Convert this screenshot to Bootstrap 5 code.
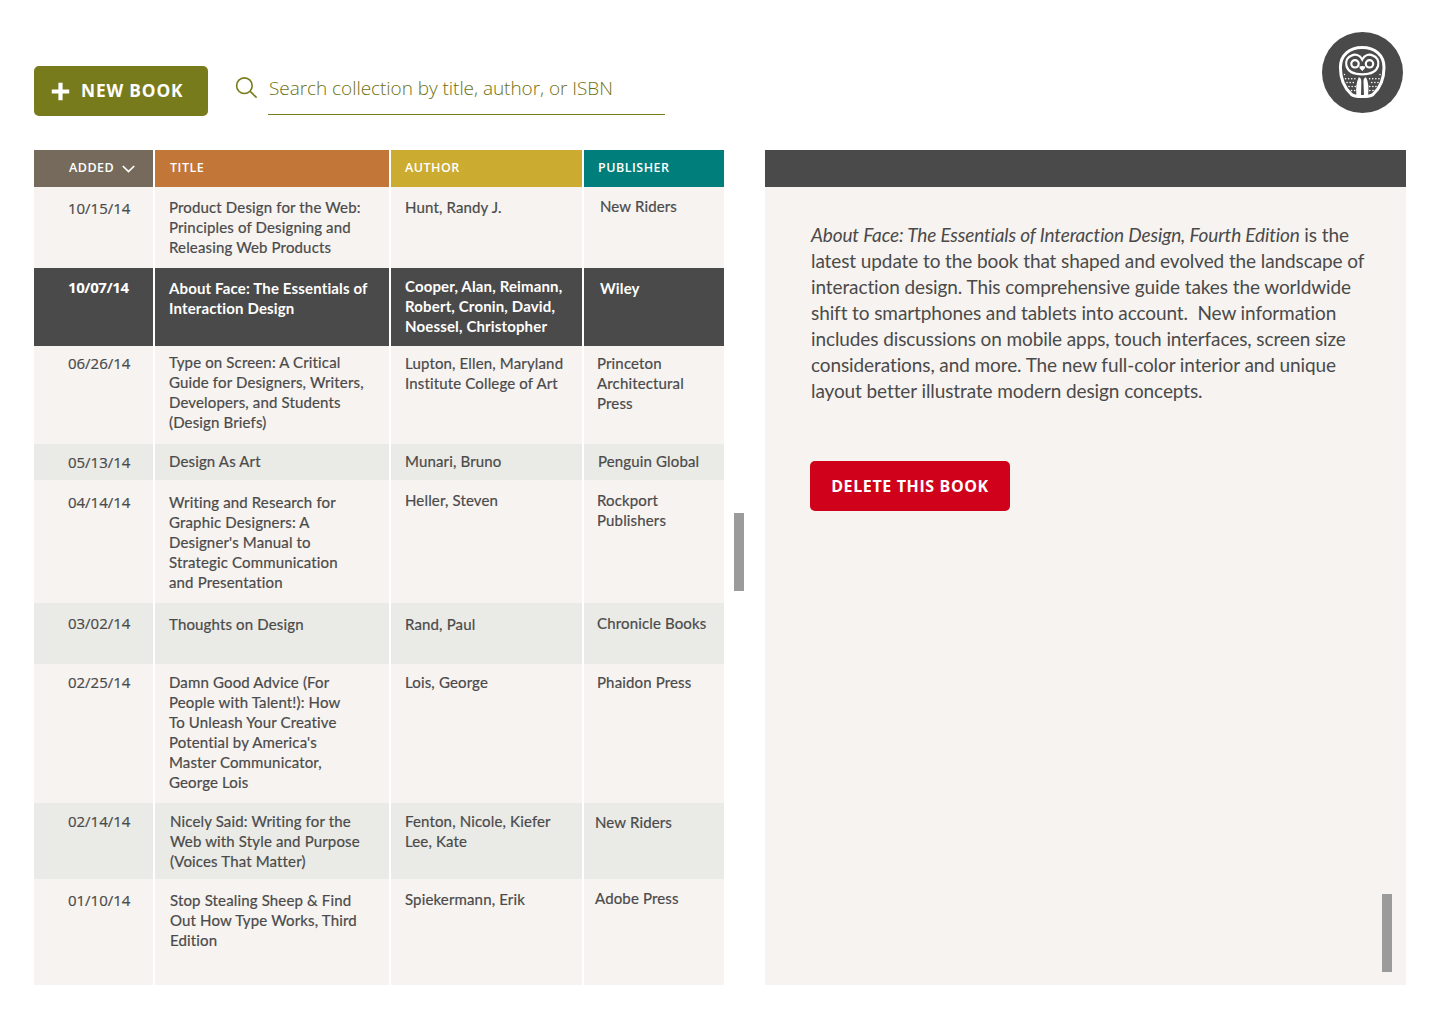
<!DOCTYPE html>
<html lang="en">
<head>
<meta charset="utf-8">
<meta name="viewport" content="width=device-width, initial-scale=1">
<title>Book collection</title>
<link href="https://cdn.jsdelivr.net/npm/bootstrap@5.3.0/dist/css/bootstrap.min.css" rel="stylesheet">
<style>
  body { font-family: Lato, "Open Sans", sans-serif; color: #4a4a4a; background: #fff; height: 1024px; overflow: hidden; }
  .page-top { height: 150px; padding: 32px 37px 0 34px; }
  .tools { padding-top: 34px; }
  .btn-cap, .btn-cap:hover { font-family: "Open Sans", sans-serif; font-weight: 700; color: #fff; border: 0; border-radius: 5px; height: 50px; padding: 0; white-space: nowrap; }
  .btn-new, .btn-new:hover { background: #777b1c; width: 174px; font-size: 17.3px; letter-spacing: .85px; padding-left: 17px; }
  .btn-new svg { margin-right: 11px; }
  .btn-delete, .btn-delete:hover { background: #d0021b; width: 200px; font-size: 16px; letter-spacing: .62px; }
  .search-box { margin-left: 27px; }
  .search-box svg { margin-top: 10px; }
  .search-line { width: 397px; height: 49px; margin-left: 10px; border: 0; border-bottom: 1px solid #777b1c; border-radius: 0; padding: 0 0 4px 1px; background: transparent; font-family: "Open Sans", sans-serif; font-weight: 300; font-size: 19px; letter-spacing: -.05px; color: #777b1c; }
  .search-line::placeholder { color: #6d7110; opacity: 1; }

  .panes { padding-left: 34px; height: 835px; }
  .books { width: 690px; }
  .book-row { display: grid; grid-template-columns: 119px 234px 191px 140px; column-gap: 2px; font-size: 15px; line-height: 20px; letter-spacing: .15px; }
  .book-row > div { background: #f7f3f0; padding: 10px 0 0 14px; white-space: nowrap; -webkit-text-stroke: .2px currentColor; }
  .book-row > div:first-child { padding-left: 34px; font-family: "Open Sans", sans-serif; letter-spacing: -.02px; }
  .book-row.alt > div { background: #eaeae6; }
  .book-row.picked > div { background: #4a4a4a; color: #fff; font-weight: 700; -webkit-text-stroke: 0; }
  .book-row.picked > div:first-child { letter-spacing: -.4px; }
  .book-row.heads { height: 37px; font-family: "Open Sans", sans-serif; font-weight: 600; font-size: 12.5px; letter-spacing: .5px; color: #fff; }
  .book-row.heads > div { padding-top: 8px; -webkit-text-stroke: 0; }
  .book-row.heads > div:first-child { padding-left: 35px; letter-spacing: .5px; }
  .heads .h-added { background: #766a5c; }
  .heads .h-title { background: #c27638; }
  .heads .h-author { background: #ccac30; }
  .heads .h-pub { background: #007e7b; }
  .h-36 { height: 36px; } .h-61 { height: 61px; } .h-76 { height: 76px; } .h-78 { height: 78px; } .h-81 { height: 81px; }
  .h-98 { height: 98px; } .h-106 { height: 106px; } .h-123 { height: 123px; } .h-139 { height: 139px; }
  .book-row > .y6 { padding-top: 6px; } .book-row > .y7 { padding-top: 7px; } .book-row > .y8 { padding-top: 8px; }
  .book-row > .y9 { padding-top: 9px; } .book-row > .y11 { padding-top: 11px; } .book-row > .y12 { padding-top: 12px; }
  .book-row > .x11 { padding-left: 11px; } .book-row > .x13 { padding-left: 13px; }
  .book-row > .x15 { padding-left: 15px; } .book-row > .x16 { padding-left: 16px; }

  .thumb { width: 10px; height: 78px; background: #9b9b9b; }
  .rail { width: 41px; padding: 363px 0 0 10px; }
  .detail { width: 641px; background: #f7f3f0; }
  .detail-bar { height: 37px; background: #4a4a4a; }
  .detail-body { height: 798px; padding: 35px 14px 13px 45px; }
  .blurb { font-size: 19px; line-height: 26px; letter-spacing: -.1px; white-space: nowrap; margin: 0 0 57px 1px; }
  .blurb em { letter-spacing: -.15px; }
</style>
</head>
<body>
<header class="page-top d-flex justify-content-between align-items-start">
  <div class="tools d-flex align-items-start">
    <button type="button" class="btn btn-cap btn-new d-flex align-items-center">
      <svg width="19" height="19" viewBox="0 0 19 19" aria-hidden="true"><path d="M9.5 .8v17.4M.8 9.5h17.4" stroke="#fff" stroke-width="4.2" fill="none"/></svg>
      <span>NEW BOOK</span>
    </button>
    <div class="search-box d-flex align-items-start">
      <svg width="23" height="23" viewBox="0 0 23 23" fill="none" stroke="#777b1c" stroke-width="1.6" aria-hidden="true"><circle cx="9.4" cy="9.7" r="7.8"/><path d="M14.9 15.2l6.7 6.4"/></svg>
      <input type="text" class="form-control search-line" placeholder="Search collection by title, author, or ISBN" aria-label="Search collection">
    </div>
  </div>
  <svg width="81" height="81" viewBox="0 0 81 81" aria-hidden="true">
    <circle cx="40.5" cy="40.5" r="40.5" fill="#4a4a4a"/>
    <g fill="none" stroke="#fff">
      <path stroke-width="3" d="M40.2 15.6C27.5 15.6 18.400 23 18.400 35.500C18.400 48 23.500 57 29.500 62.500C31.500 64.200 34.500 64.500 40.200 64.500C46 64.500 49 64.200 51 62.500C57 57 62 48 62 35.500C62 23 53 15.600 40.200 15.600Z"/>
      <path stroke-width="2.300" d="M40.200 27.500C37.500 22.500 33 22.200 30 23.300C25.500 24.800 23.300 29 24.500 34C26 39.800 32.500 42.300 40.200 42.300C48 42.300 54.500 39.800 56 34C57.200 29 55 24.800 50.500 23.300C47.500 22.200 43 22.500 40.200 27.500Z"/>
      <circle cx="33" cy="31.800" r="3.700" stroke-width="2.200"/>
      <circle cx="47.500" cy="31.800" r="3.700" stroke-width="2.200"/>
    </g>
    <path fill="#fff" d="M37.300 34.500q3-1 6 0q.3 1.500-3 4.500q-3.300-3-3-4.500zM34.500 63.500C33.500 56 34.500 50 36.800 45.200Q39.500 46 39.300 50L39 63.500ZM46 63.500C47 56 46.500 50 44 45.200Q41.200 46 41.500 50L42 63.500Z"/>
    <g fill="none" stroke="#fff" stroke-width="1.500" stroke-linecap="round" stroke-dasharray=".1 3">
      <path d="M22.500 42.500v3M23.500 46.700h9.500M25 50.500h8M27 54.500h7M29.500 58.500h4M58 42.500v3M57 46.700h-9.500M56 50.500h-8M54 54.500h-7M51 58.500h-4"/>
    </g>
  </svg>
</header>

<main class="panes d-flex">
  <section class="books">
    <div class="book-row heads">
      <div class="h-added">ADDED<svg class="ms-2" width="13" height="8" viewBox="0 0 13 8" aria-hidden="true"><path d="M.8 1l5.700 5.500L12.200 1" fill="none" stroke="#fff" stroke-width="1.700"/></svg></div>
      <div class="h-title x15">TITLE</div><div class="h-author">AUTHOR</div><div class="h-pub">PUBLISHER</div>
    </div>
    <div class="book-row h-81">
      <div class="y11">10/15/14</div><div>Product Design for the Web:<br>Principles of Designing and<br>Releasing Web Products</div><div>Hunt, Randy J.</div><div class="y9 x16">New Riders</div>
    </div>
    <div class="book-row picked h-78">
      <div class="y9">10/07/14</div><div>About Face: The Essentials of<br>Interaction Design</div><div class="y8">Cooper, Alan, Reimann,<br>Robert, Cronin, David,<br>Noessel, Christopher</div><div class="x16">Wiley</div>
    </div>
    <div class="book-row h-98">
      <div class="y7">06/26/14</div><div class="y6">Type on Screen: A Critical<br>Guide for Designers, Writers,<br>Developers, and Students<br>(Design Briefs)</div><div class="y7">Lupton, Ellen, Maryland<br>Institute College of Art</div><div class="y7 x13">Princeton<br>Architectural<br>Press</div>
    </div>
    <div class="book-row alt h-36">
      <div class="y8">05/13/14</div><div class="y7">Design As Art</div><div class="y7">Munari, Bruno</div><div class="y7">Penguin Global</div>
    </div>
    <div class="book-row h-123">
      <div class="y12">04/14/14</div><div class="y12">Writing and Research for<br>Graphic Designers: A<br>Designer's Manual to<br>Strategic Communication<br>and Presentation</div><div>Heller, Steven</div><div class="x13">Rockport<br>Publishers</div>
    </div>
    <div class="book-row alt h-61">
      <div>03/02/14</div><div class="y11">Thoughts on Design</div><div class="y11">Rand, Paul</div><div class="x13">Chronicle Books</div>
    </div>
    <div class="book-row h-139">
      <div class="y8">02/25/14</div><div class="y8">Damn Good Advice (For<br>People with Talent!): How<br>To Unleash Your Creative<br>Potential by America's<br>Master Communicator,<br>George Lois</div><div class="y8">Lois, George</div><div class="y8 x13">Phaidon Press</div>
    </div>
    <div class="book-row alt h-76">
      <div class="y8">02/14/14</div><div class="y8 x15">Nicely Said: Writing for the<br>Web with Style and Purpose<br>(Voices That Matter)</div><div class="y8">Fenton, Nicole, Kiefer<br>Lee, Kate</div><div class="y9 x11">New Riders</div>
    </div>
    <div class="book-row h-106">
      <div class="y11">01/10/14</div><div class="y11 x15">Stop Stealing Sheep &amp; Find<br>Out How Type Works, Third<br>Edition</div><div>Spiekermann, Erik</div><div class="y9 x11">Adobe Press</div>
    </div>
  </section>
  <div class="rail"><div class="thumb"></div></div>
  <section class="detail">
    <div class="detail-bar"></div>
    <div class="detail-body d-flex flex-column align-items-start">
      <p class="blurb"><em>About Face: The Essentials of Interaction Design, Fourth Edition</em> is the<br>latest update to the book that shaped and evolved the landscape of<br>interaction design. This comprehensive guide takes the worldwide<br>shift to smartphones and tablets into account.&nbsp; New information<br>includes discussions on mobile apps, touch interfaces, screen size<br>considerations, and more. The new full-color interior and unique<br>layout better illustrate modern design concepts.</p>
      <button type="button" class="btn btn-cap btn-delete">DELETE THIS BOOK</button>
      <div class="thumb mt-auto align-self-end"></div>
    </div>
  </section>
</main>
<script src="https://cdn.jsdelivr.net/npm/bootstrap@5.3.0/dist/js/bootstrap.bundle.min.js"></script>
</body>
</html>
